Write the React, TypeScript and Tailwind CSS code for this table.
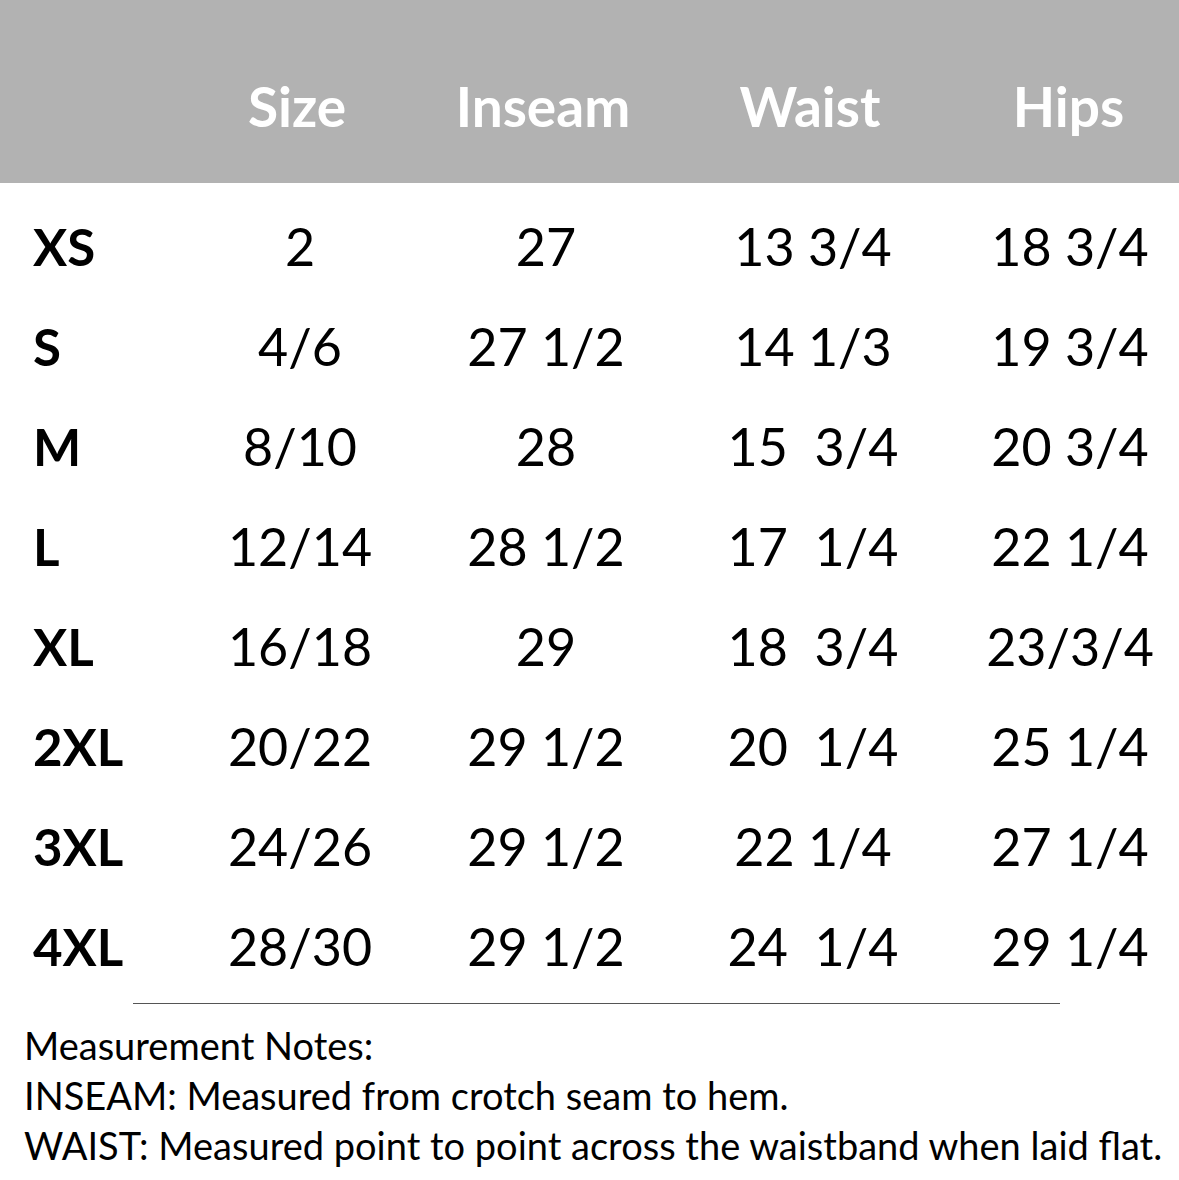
import React from "react";

const rows: [string, string, string, string, string][] = [
  ["XS", "2", "27", "13 3/4", "18 3/4"],
  ["S", "4/6", "27 1/2", "14 1/3", "19 3/4"],
  ["M", "8/10", "28", "15  3/4", "20 3/4"],
  ["L", "12/14", "28 1/2", "17  1/4", "22 1/4"],
  ["XL", "16/18", "29", "18  3/4", "23/3/4"],
  ["2XL", "20/22", "29 1/2", "20  1/4", "25 1/4"],
  ["3XL", "24/26", "29 1/2", "22 1/4", "27 1/4"],
  ["4XL", "28/30", "29 1/2", "24  1/4", "29 1/4"],
];

export default function App() {
  return (
    <div
      className="w-[1179px] h-[1180px] bg-white overflow-hidden text-black"
      style={{ fontFamily: "Lato, 'Noto Sans', sans-serif" }}
    >
      <div className="h-[183px] bg-[#b2b2b2] pt-[29px] grid grid-cols-[177px_240px_252px_282px_228px] items-center text-white font-bold text-[55px] leading-none">
        <div />
        <div className="text-center">Size</div>
        <div className="text-center">Inseam</div>
        <div className="text-center">Waist</div>
        <div className="text-center pl-[7px]">Hips</div>
      </div>
      <div className="pt-[13px]">
        {rows.map((r) => (
          <div
            key={r[0]}
            className="h-[100px] grid grid-cols-[180px_240px_252px_282px_225px] items-center text-[52px] leading-none whitespace-pre"
          >
            <div className="pl-[33px] font-bold text-[51px]">{r[0]}</div>
            <div className="text-center">{r[1]}</div>
            <div className="text-center">{r[2]}</div>
            <div className="text-center">{r[3]}</div>
            <div className="text-center pl-[7px]">{r[4]}</div>
          </div>
        ))}
      </div>
      <div className="mt-[7px] ml-[133px] w-[927px] h-px bg-[#555555]" />
      <div className="mt-[16px] pl-[24px] text-[38px] leading-[50px] whitespace-nowrap">
        <div>Measurement Notes:</div>
        <div>INSEAM: Measured from crotch seam to hem.</div>
        <div>WAIST: Measured point to point across the waistband when laid flat.</div>
      </div>
    </div>
  );
}
